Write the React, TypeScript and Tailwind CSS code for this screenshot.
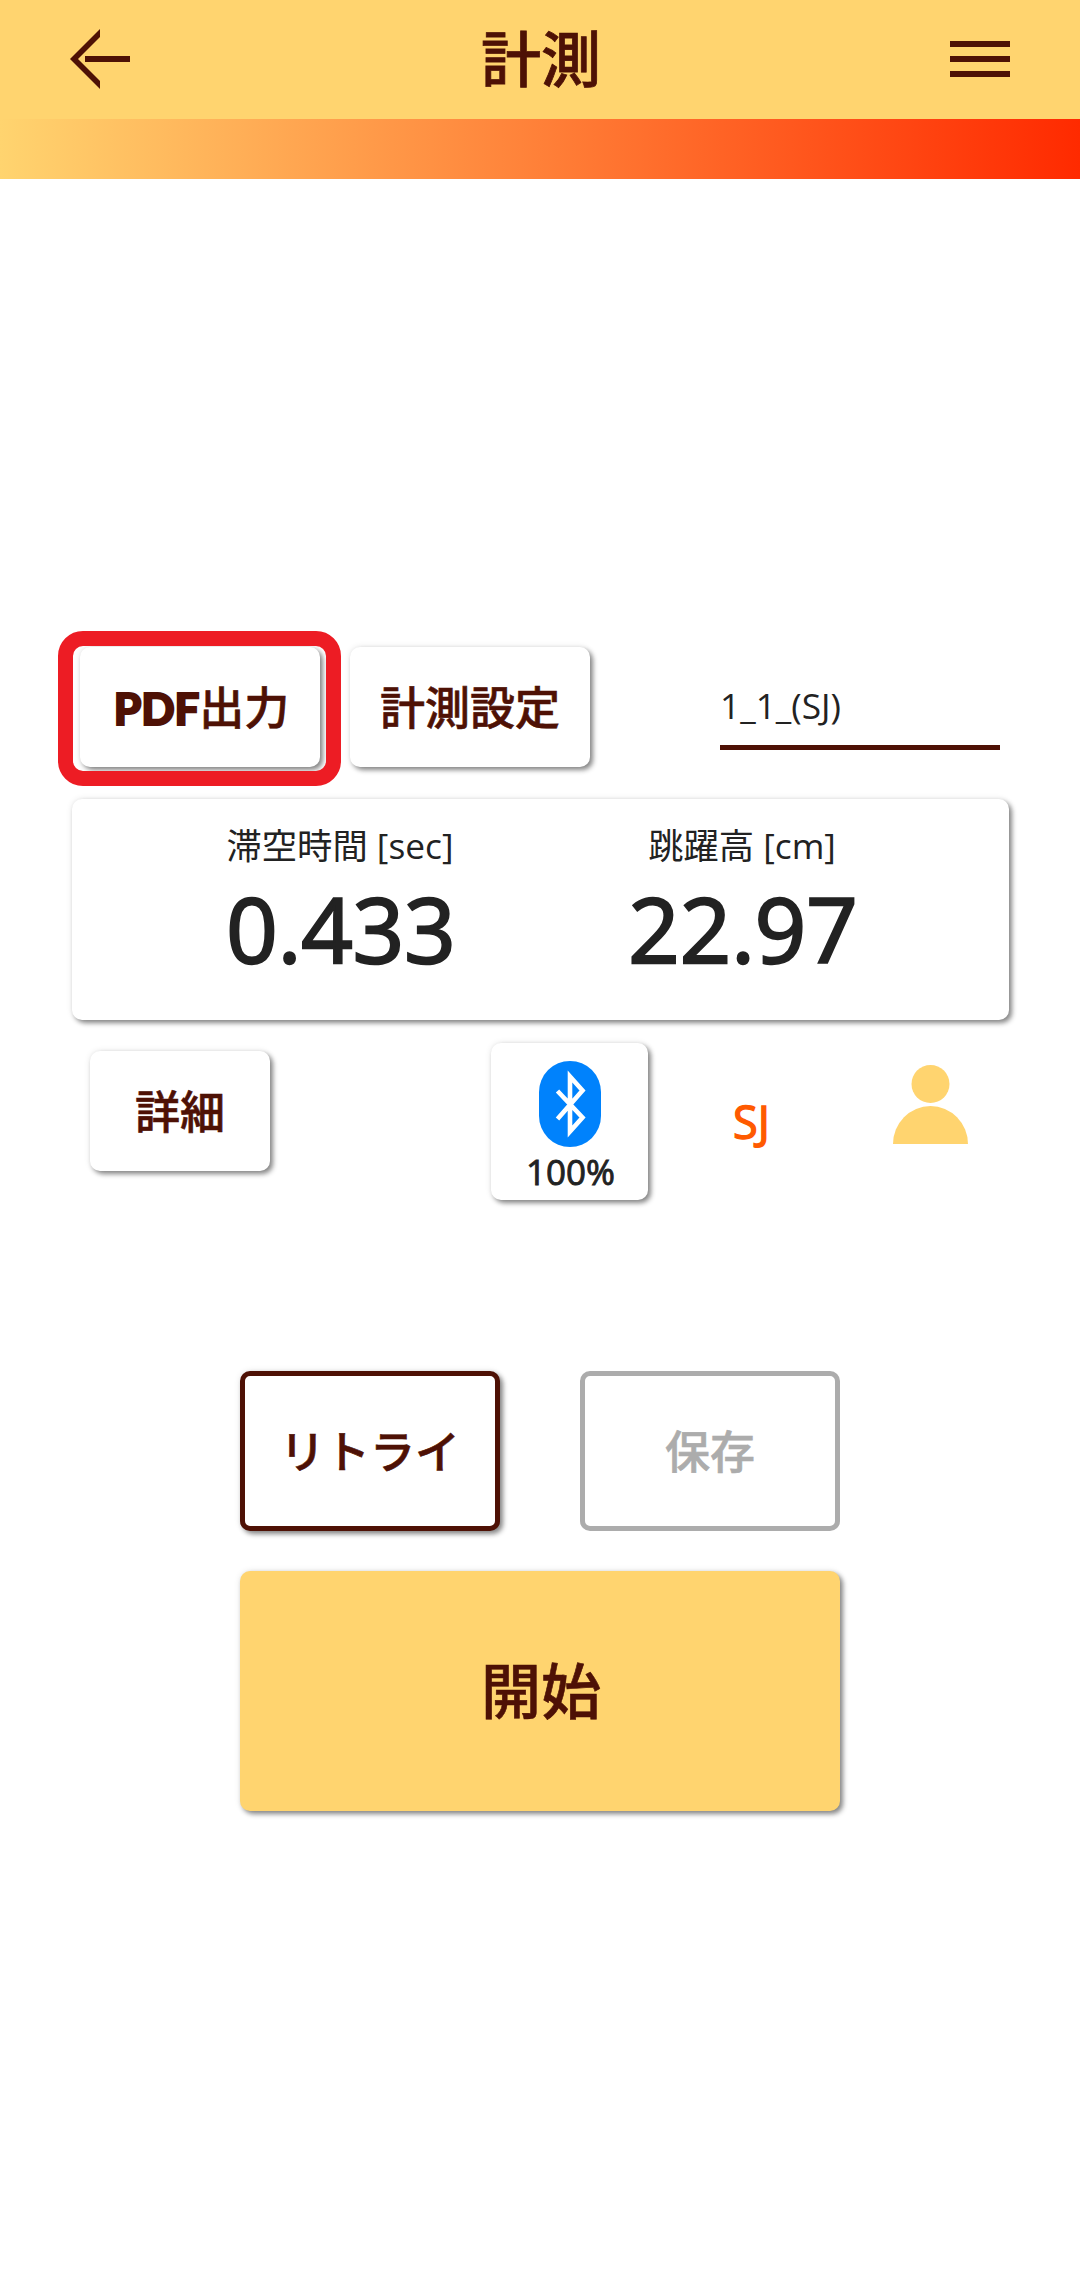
import type { ReactNode } from 'react'
import clsx from 'clsx'

const SHADOW = 'shadow-[3px_3px_5px_rgba(0,0,0,0.45),0_0_6px_rgba(0,0,0,0.1)]'

const RESULTS = [
  { label: '滞空時間 [sec]', value: '0.433', width: 'w-[402px]' },
  { label: '跳躍高 [cm]', value: '22.97', width: 'w-[402px]' },
]

function CardButton({ className, children }: { className?: string; children: ReactNode }) {
  return (
    <button
      className={clsx(
        'flex h-[120px] shrink-0 items-center justify-center rounded-[10px] bg-white text-[45px] leading-none font-medium text-[#4e1105] [-webkit-text-stroke:0.6px_#4e1105]',
        SHADOW,
        className,
      )}
    >
      {children}
    </button>
  )
}

function BackIcon() {
  return (
    <svg className="h-[60px] w-[60px]" viewBox="0 0 60 60" fill="#4e1105">
      <path d="M30 0v8L8 30l22 22v8L0 30z" />
      <path d="M15 27h45v6H15z" />
    </svg>
  )
}

function BluetoothIcon() {
  return (
    <svg className="h-[86px] w-[62px]" viewBox="0 0 62 86">
      <rect width="62" height="86" rx="31" fill="#0082fc" />
      <path
        d="M18.5 30l25 26.5-12.5 14V15.500l12.5 14L18.500 58"
        fill="none"
        stroke="#fff"
        strokeWidth="4.6"
        strokeMiterlimit="10"
      />
    </svg>
  )
}

function UserIcon() {
  return (
    <svg className="h-[79px] w-[75px]" viewBox="0 0 75 79" fill="#ffd46f">
      <circle cx="37.5" cy="19" r="19" />
      <path d="M0 79a37.5 38 0 0 1 75 0z" />
    </svg>
  )
}

export default function App() {
  return (
    <div className="flex h-[2282px] w-[1080px] flex-col overflow-hidden bg-white font-['Open_Sans','Noto_Sans_CJK_JP',sans-serif] text-[#222]">
      {/* Header */}
      <header className="flex h-[119px] shrink-0 items-center justify-between bg-[#ffd46f] px-[70px] pb-[2px]">
        <button aria-label="戻る">
          <BackIcon />
        </button>
        <h1 className="pl-[2px] text-[60px] leading-none font-medium text-[#4e1105] [-webkit-text-stroke:0.8px_#4e1105]">計測</h1>
        <button aria-label="メニュー" className="flex w-[60px] flex-col gap-[9px]">
          <span className="h-[6px] bg-[#4e1105]" />
          <span className="h-[6px] bg-[#4e1105]" />
          <span className="h-[6px] bg-[#4e1105]" />
        </button>
      </header>
      <div className="h-[60px] shrink-0 bg-linear-to-r/srgb from-[#ffd46f] via-[#ff8038] to-[#ff2a00]" />

      <main className="flex flex-col">
        {/* Toolbar */}
        <div className="mt-[468px] flex h-[120px] pl-[80px]">
          <div className="relative">
            <CardButton className="w-[240px] pl-[3px]">
              <span className="pt-[2px] font-[Lato] text-[44px] font-black tracking-[-0.2px] [-webkit-text-stroke:2px_#4e1105]">PDF</span>
              出力
            </CardButton>
            <div className="absolute -top-[16px] -left-[22px] h-[155px] w-[283px] rounded-[25px] border-[15px] border-[#ed1c24]" />
          </div>
          <CardButton className="ml-[30px] w-[240px]">計測設定</CardButton>
          <div className="mt-[33px] ml-[130px] h-[70px] w-[280px] border-b-[5px] border-[#4e1105] text-[35.3px] leading-[50px]">
            1_1_(SJ)
          </div>
        </div>

        {/* Results */}
        <section className={clsx('mt-[32px] ml-[72px] flex h-[221px] w-[937px] rounded-[10px] bg-white pl-[67px]', SHADOW)}>
          {RESULTS.map(({ label, value, width }) => (
            <div key={label} className={clsx('flex flex-col items-center', width)}>
              <p className="mt-[21px] text-[35.3px] leading-[50px]">{label}</p>
              <p className="mt-[8px] pl-[2px] text-[90px] leading-[100px] font-medium [-webkit-text-stroke:2.4px_#222]">{value}</p>
            </div>
          ))}
        </section>

        {/* Device status */}
        <div className="mt-[23px] flex h-[157px] pl-[90px]">
          <CardButton className="mt-[8px] w-[180px]">詳細</CardButton>
          <div className={clsx('ml-[221px] flex h-[157px] w-[157px] flex-col items-center rounded-[10px] bg-white pt-[18px]', SHADOW)}>
            <BluetoothIcon />
            <span className="pl-[2px] text-[35px] leading-[50px] font-medium [-webkit-text-stroke:0.9px_#222]">100%</span>
          </div>
          <span className="mt-[49px] ml-[85px] w-[40px] text-[45px] leading-[60px] font-medium text-[#ff5a00] [-webkit-text-stroke:1.4px_#ff5a00]">
            SJ
          </span>
          <div className="mt-[22px] ml-[120px]">
            <UserIcon />
          </div>
        </div>

        {/* Actions */}
        <div className="mx-auto mt-[171px] flex w-[600px] flex-wrap justify-between">
          <CardButton className="h-[160px]! w-[260px] border-[5px] border-[#4e1105]">リトライ</CardButton>
          <button
            disabled
            className="h-[160px] w-[260px] rounded-[10px] border-[5px] border-[#acacac] text-[45px] leading-none font-medium text-[#acacac] [-webkit-text-stroke:0.6px_#acacac]"
          >
            保存
          </button>
          <CardButton className="mt-[40px] h-[240px]! w-[600px] bg-[#ffd46f]! pl-[2px] text-[60px]!">開始</CardButton>
        </div>
      </main>
    </div>
  )
}
